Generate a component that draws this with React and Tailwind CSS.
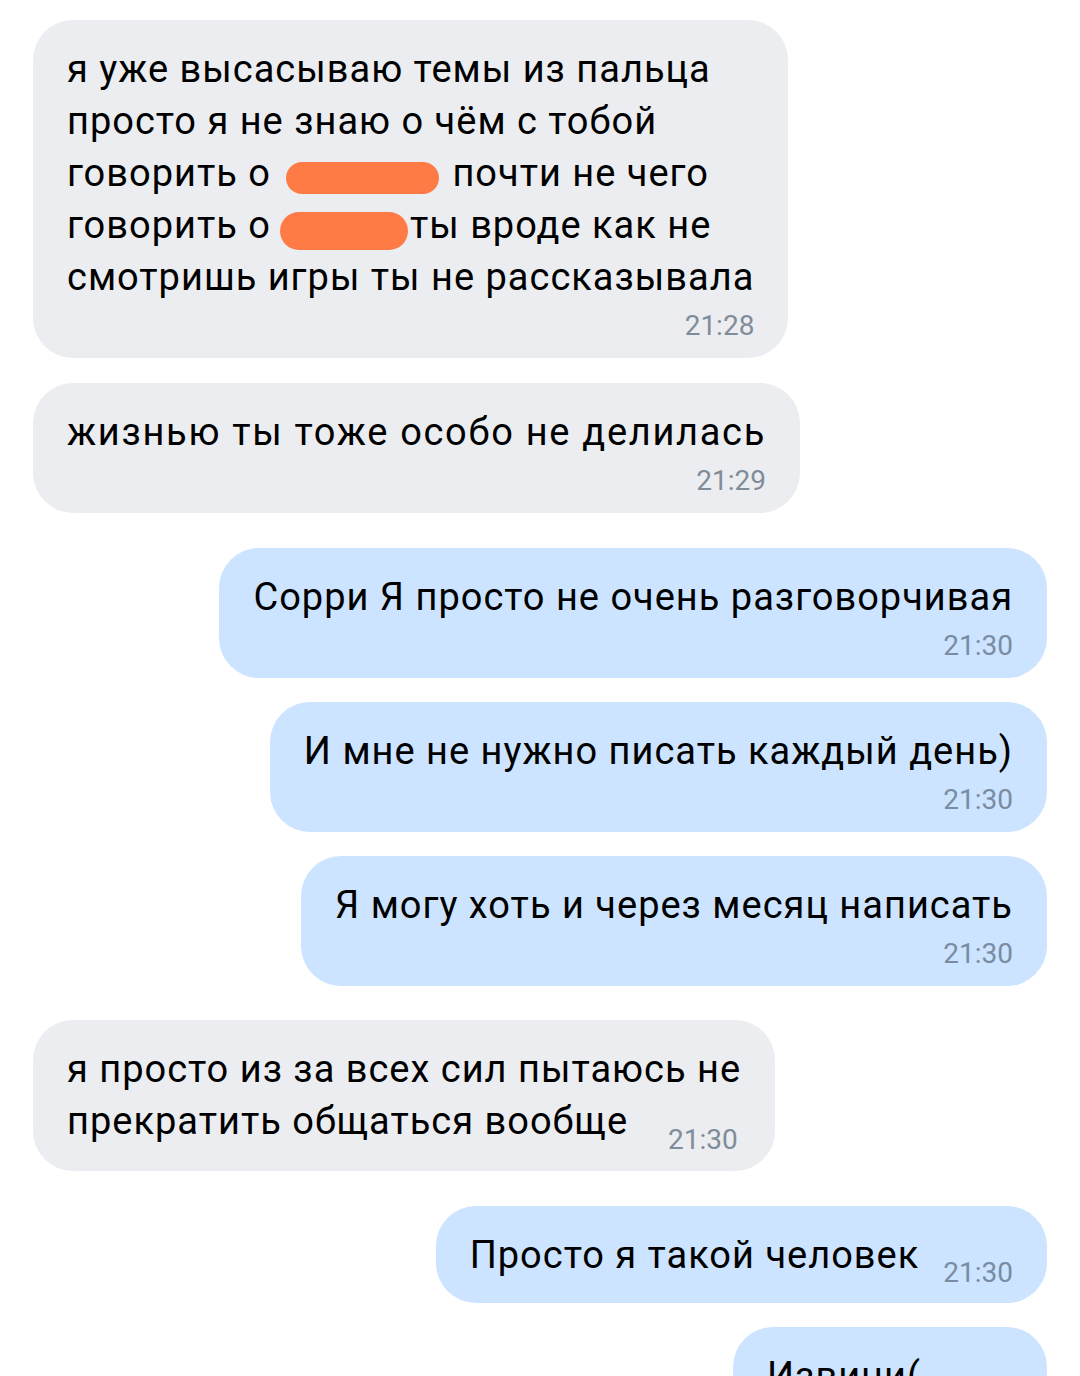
import React from "react";

const IN = "bg-[#ebedf0]";
const OUT = "bg-[#cce4ff]";

function Bubble({ out, children, time, timeColor, width = "w-fit", track = "tracking-[1px]" }) {
  return (
    <div
      className={`${width} rounded-[40px] px-[34px] pt-[23px] pb-[16px] ${out ? OUT + " self-end" : IN + " self-start"}`}
    >
      <div className={`text-[38px] leading-[52px] ${track} text-black whitespace-nowrap`}>{children}</div>
      <div className={`mt-[7px] text-right text-[28px] leading-[32px] ${timeColor}`}>{time}</div>
    </div>
  );
}

function InlineBubble({ out, children, time, timeColor, ml, lower, pb }) {
  return (
    <div
      className={`w-fit rounded-[40px] px-[34px] pt-[23px] ${pb} ${out ? OUT + " self-end" : IN + " self-start"}`}
    >
      <div className="text-[38px] leading-[52px] tracking-[1px] text-black whitespace-nowrap">
        {children}
        <span className={`inline-block text-[28px] leading-none tracking-normal ${ml} ${lower} ${timeColor}`}>{time}</span>
      </div>
    </div>
  );
}

export default function App() {
  const gIn = "text-[#818c99]";
  const gOut = "text-[#7a8ca3]";
  return (
    <div
      className="h-[1376px] w-[1080px] overflow-hidden bg-white px-[33px] pt-[20px]"
      style={{ fontFamily: "Roboto, 'Noto Sans', sans-serif" }}
    >
      <div className="flex flex-col">
        <Bubble time="21:28" timeColor={gIn}>
          я уже высасываю темы из пальца
          <br />
          просто я не знаю о чём с тобой
          <br />
          говорить о
          <span className="ml-[15px] mr-[3px] inline-block h-[32px] w-[153px] rounded-[16px] bg-[#ff7b45] align-[-8px]"></span>{" "}
          почти не чего
          <br />
          говорить о
          <span className="ml-[9px] mr-[2px] inline-block h-[38px] w-[128px] rounded-[19px] bg-[#ff7b45] align-[-12px]"></span>
          ты вроде как не
          <br />
          смотришь игры ты не рассказывала
        </Bubble>

        <div className="mt-[25px] flex flex-col">
          <Bubble time="21:29" timeColor={gIn} track="tracking-[1.7px]">
            жизнью ты тоже особо не делилась
          </Bubble>
        </div>

        <div className="mt-[35px] flex flex-col">
          <Bubble out time="21:30" timeColor={gOut}>
            Сорри Я просто не очень разговорчивая
          </Bubble>
        </div>

        <div className="mt-[24px] flex flex-col">
          <Bubble out time="21:30" timeColor={gOut}>
            И мне не нужно писать каждый день)
          </Bubble>
        </div>

        <div className="mt-[24px] flex flex-col">
          <Bubble out time="21:30" timeColor={gOut}>
            Я могу хоть и через месяц написать
          </Bubble>
        </div>

        <div className="mt-[34px] flex flex-col">
          <InlineBubble time="21:30" timeColor={gIn} ml="ml-[40px]" lower="align-[-15px]" pb="pb-[17px]">
            я просто из за всех сил пытаюсь не
            <br />
            прекратить общаться вообще
          </InlineBubble>
        </div>

        <div className="mt-[35px] flex flex-col">
          <InlineBubble out time="21:30" timeColor={gOut} ml="ml-[24px]" lower="align-[-14px]" pb="pb-[16px]">
            Просто я такой человек
          </InlineBubble>
        </div>

        <div className="mt-[24px] flex flex-col">
          <Bubble out time="21:30" timeColor={gOut} width="w-[314px]">
            Извини(
          </Bubble>
        </div>
      </div>
    </div>
  );
}
